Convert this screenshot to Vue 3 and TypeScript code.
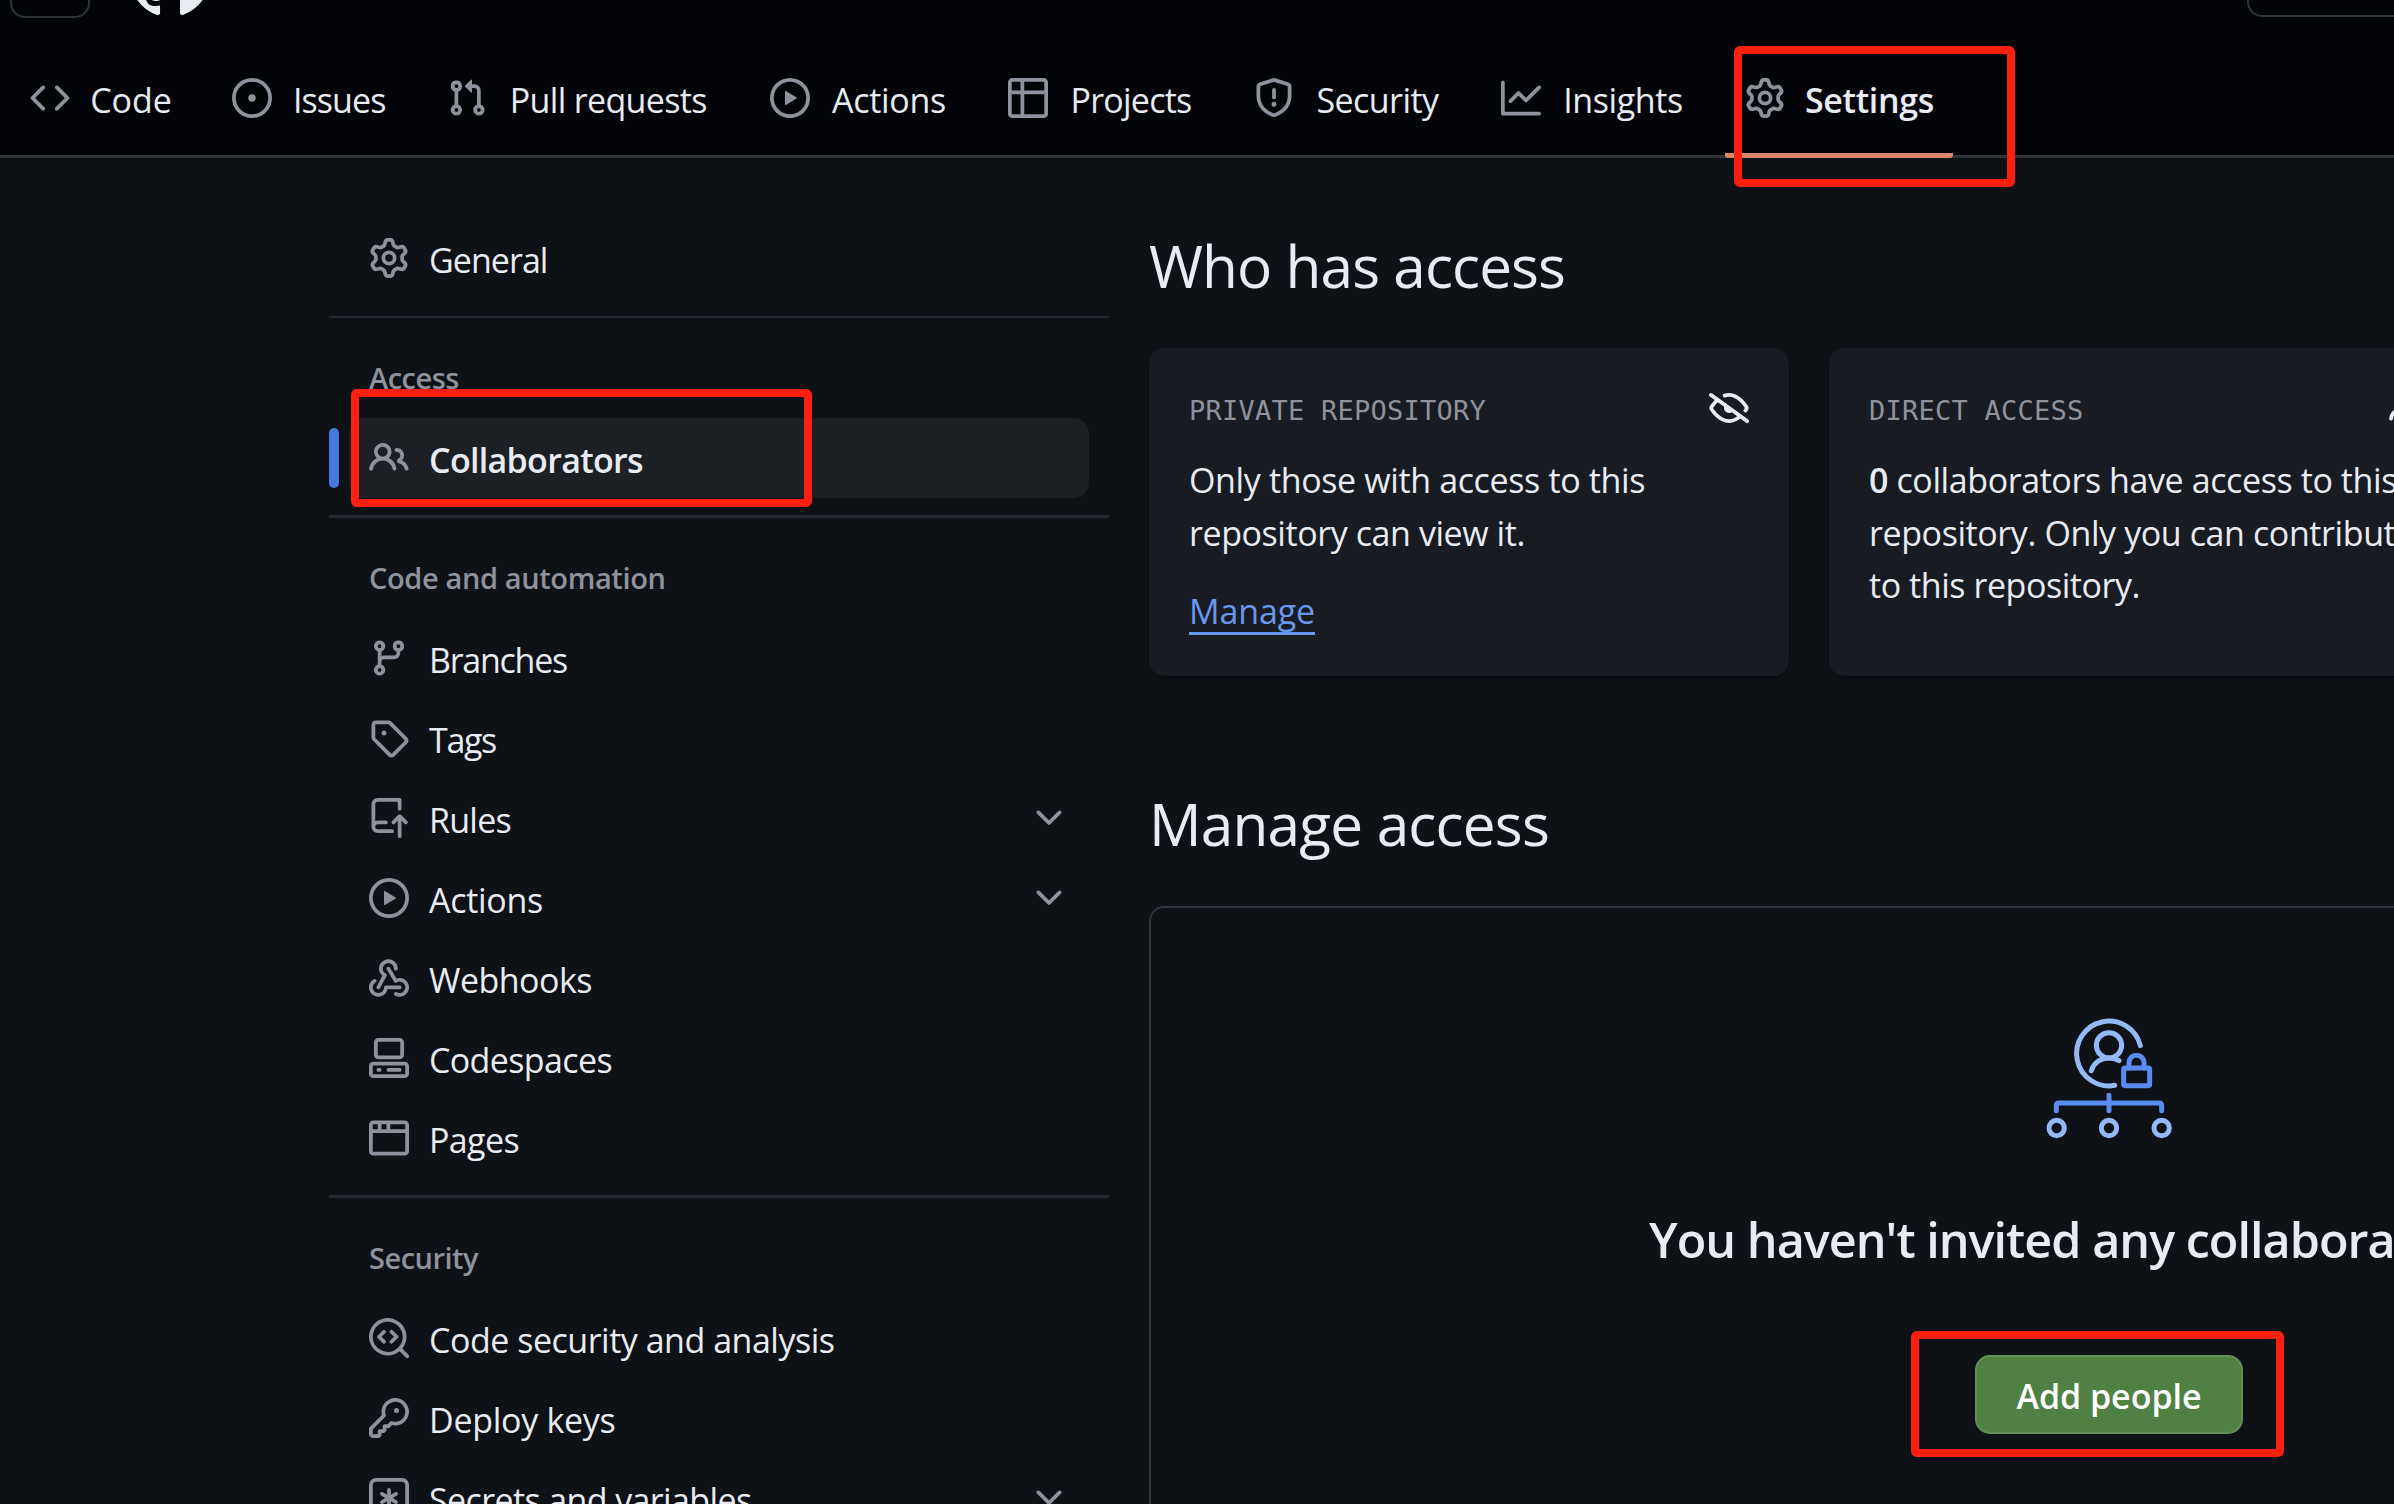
<script setup lang="ts">
import type { Directive } from 'vue'

interface Tab { label: string; icon: string; width: number; text: number; active?: boolean }
interface Item { label: string; icon: string; text: number; active?: boolean; expandable?: boolean }
interface Section { title?: string; titleWidth?: number; items: Item[] }

// Tracks the text out or in so that its advance width equals the given number of pixels.
const vFit: Directive<HTMLElement, number> = {
  mounted(el, binding) {
    const natural = el.getBoundingClientRect().width
    const count = (el.textContent ?? '').length
    el.style.letterSpacing = `${((binding.value - natural) / count).toFixed(4)}px`
  },
}

const icons: Record<string, string> = {
  code: 'm11.28 3.22 4.25 4.25a.75.75 0 0 1 0 1.06l-4.25 4.25a.749.749 0 0 1-1.275-.326.749.749 0 0 1 .215-.734L13.94 8l-3.72-3.72a.749.749 0 0 1 .326-1.275.749.749 0 0 1 .734.215Zm-6.56 0a.751.751 0 0 1 1.042.018.751.751 0 0 1 .018 1.042L2.06 8l3.72 3.72a.749.749 0 0 1-.326 1.275.749.749 0 0 1-.734-.215L.47 8.53a.75.75 0 0 1 0-1.06Z',
  issue: 'M8 9.5a1.5 1.5 0 1 0 0-3 1.5 1.5 0 0 0 0 3ZM8 0a8 8 0 1 1 0 16A8 8 0 0 1 8 0ZM1.5 8a6.5 6.5 0 1 0 13 0 6.5 6.5 0 0 0-13 0Z',
  pull: 'M1.5 3.25a2.25 2.25 0 1 1 3 2.122v5.256a2.251 2.251 0 1 1-1.5 0V5.372A2.25 2.25 0 0 1 1.5 3.25Zm5.677-.177L9.573.677A.25.25 0 0 1 10 .854V2.5h1A2.5 2.5 0 0 1 13.5 5v5.628a2.251 2.251 0 1 1-1.5 0V5a1 1 0 0 0-1-1h-1v1.646a.25.25 0 0 1-.427.177L7.177 3.427a.25.25 0 0 1 0-.354ZM3.75 2.5a.75.75 0 1 0 0 1.5.75.75 0 0 0 0-1.5Zm0 9.5a.75.75 0 1 0 0 1.5.75.75 0 0 0 0-1.5Zm8.25.75a.75.75 0 1 0 1.5 0 .75.75 0 0 0-1.5 0Z',
  play: 'M8 0a8 8 0 1 1 0 16A8 8 0 0 1 8 0ZM1.5 8a6.5 6.5 0 1 0 13 0 6.5 6.5 0 0 0-13 0Zm4.879-2.773 4.264 2.559a.25.25 0 0 1 0 .428l-4.264 2.559A.25.25 0 0 1 6 10.559V5.442a.25.25 0 0 1 .379-.215Z',
  table: 'M0 1.75C0 .784.784 0 1.75 0h12.5C15.216 0 16 .784 16 1.75v12.5A1.75 1.75 0 0 1 14.25 16H1.75A1.75 1.75 0 0 1 0 14.25ZM6.5 6.5v8h7.75a.25.25 0 0 0 .25-.25V6.5Zm8-1.5V1.75a.25.25 0 0 0-.25-.25H6.5V5Zm-13 1.5v7.75c0 .138.112.25.25.25H5v-8ZM5 5V1.5H1.75a.25.25 0 0 0-.25.25V5Z',
  shield: 'M7.467.133a1.748 1.748 0 0 1 1.066 0l5.25 1.68A1.75 1.75 0 0 1 15 3.48V7c0 1.566-.32 3.182-1.303 4.682-.983 1.498-2.585 2.813-5.032 3.855a1.697 1.697 0 0 1-1.33 0c-2.447-1.042-4.049-2.357-5.032-3.855C1.32 10.182 1 8.566 1 7V3.48a1.75 1.75 0 0 1 1.217-1.667Zm.61 1.429a.25.25 0 0 0-.153 0l-5.25 1.68a.25.25 0 0 0-.174.238V7c0 1.358.275 2.666 1.057 3.86.784 1.194 2.121 2.34 4.366 3.297a.196.196 0 0 0 .154 0c2.245-.956 3.582-2.104 4.366-3.298C13.225 9.666 13.5 8.36 13.5 7V3.48a.251.251 0 0 0-.174-.237l-5.25-1.68ZM8.75 4.75v3a.75.75 0 0 1-1.5 0v-3a.75.75 0 0 1 1.5 0ZM9 10.5a1 1 0 1 1-2 0 1 1 0 0 1 2 0Z',
  graph: 'M1.5 1.75V13.5h13.75a.75.75 0 0 1 0 1.5H.75a.75.75 0 0 1-.75-.75V1.75a.75.75 0 0 1 1.5 0Zm14.28 2.53-5.25 5.25a.75.75 0 0 1-1.06 0L7 7.06 4.28 9.78a.751.751 0 0 1-1.042-.018.751.751 0 0 1-.018-1.042l3.25-3.25a.75.75 0 0 1 1.06 0L10 7.94l4.72-4.72a.751.751 0 0 1 1.042.018.751.751 0 0 1 .018 1.042Z',
  gear: 'M8 0a8.2 8.2 0 0 1 .701.031C9.444.095 9.99.645 10.16 1.29l.288 1.107c.018.066.079.158.212.224.231.114.454.243.668.386.123.082.233.09.299.071l1.103-.303c.644-.176 1.392.021 1.82.63.27.385.506.792.704 1.218.315.675.111 1.422-.364 1.891l-.814.806c-.049.048-.098.147-.088.294.016.257.016.515 0 .772-.01.147.038.246.088.294l.814.806c.475.469.679 1.216.364 1.891a7.977 7.977 0 0 1-.704 1.217c-.428.61-1.176.807-1.82.63l-1.102-.302c-.067-.019-.177-.011-.3.071a5.909 5.909 0 0 1-.668.386c-.133.066-.194.158-.211.224l-.29 1.106c-.168.646-.715 1.196-1.458 1.26a8.006 8.006 0 0 1-1.402 0c-.743-.064-1.289-.614-1.458-1.26l-.289-1.106c-.018-.066-.079-.158-.212-.224a5.738 5.738 0 0 1-.668-.386c-.123-.082-.233-.09-.299-.071l-1.103.303c-.644.176-1.392-.021-1.82-.63a8.12 8.12 0 0 1-.704-1.218c-.315-.675-.111-1.422.363-1.891l.815-.806c.05-.048.098-.147.088-.294a6.214 6.214 0 0 1 0-.772c.01-.147-.038-.246-.088-.294l-.815-.806C.635 6.045.431 5.298.746 4.623a7.92 7.92 0 0 1 .704-1.217c.428-.61 1.176-.807 1.82-.63l1.102.302c.067.019.177.011.3-.071.214-.143.437-.272.668-.386.133-.066.194-.158.211-.224l.29-1.106C6.009.645 6.556.095 7.299.03 7.53.01 7.764 0 8 0Zm-.571 1.525c-.036.003-.108.036-.137.146l-.289 1.105c-.147.561-.549.967-.998 1.189-.173.086-.34.183-.5.29-.417.278-.97.423-1.529.27l-1.103-.303c-.109-.03-.175.016-.195.045-.22.312-.412.644-.573.99-.014.031-.021.11.059.19l.815.806c.411.406.562.957.53 1.456a4.709 4.709 0 0 0 0 .582c.032.499-.119 1.05-.53 1.456l-.815.806c-.081.08-.073.159-.059.19.162.346.353.677.573.989.02.03.085.076.195.046l1.102-.303c.56-.153 1.113-.008 1.53.27.161.107.328.204.501.29.447.222.85.629.997 1.189l.289 1.105c.029.109.101.143.137.146a6.6 6.6 0 0 0 1.142 0c.036-.003.108-.036.137-.146l.289-1.105c.147-.561.549-.967.998-1.189.173-.086.34-.183.5-.29.417-.278.97-.423 1.529-.27l1.103.303c.109.029.175-.016.195-.045.22-.313.411-.644.573-.99.014-.031.021-.11-.059-.19l-.815-.806c-.411-.406-.562-.957-.53-1.456a4.709 4.709 0 0 0 0-.582c-.032-.499.119-1.05.53-1.456l.815-.806c.081-.08.073-.159.059-.19a6.464 6.464 0 0 0-.573-.989c-.02-.03-.085-.076-.195-.046l-1.102.303c-.56.153-1.113.008-1.53-.27a4.44 4.44 0 0 0-.501-.29c-.447-.222-.85-.629-.997-1.189l-.289-1.105c-.029-.11-.101-.143-.137-.146a6.6 6.6 0 0 0-1.142 0ZM11 8a3 3 0 1 1-6 0 3 3 0 0 1 6 0ZM9.5 8a1.5 1.5 0 1 0-3.001.001A1.5 1.5 0 0 0 9.5 8Z',
  people: 'M2 5.5a3.5 3.5 0 1 1 5.898 2.549 5.508 5.508 0 0 1 3.034 4.084.75.75 0 1 1-1.482.235 4 4 0 0 0-7.9 0 .75.75 0 0 1-1.482-.236A5.507 5.507 0 0 1 3.102 8.05 3.493 3.493 0 0 1 2 5.5ZM11 4a3.001 3.001 0 0 1 2.22 5.018 5.01 5.01 0 0 1 2.56 3.012.749.749 0 0 1-.885.954.752.752 0 0 1-.549-.514 3.507 3.507 0 0 0-2.522-2.372.75.75 0 0 1-.574-.73v-.352a.75.75 0 0 1 .416-.672A1.5 1.5 0 0 0 11 5.5.75.75 0 0 1 11 4Zm-5.5-.5a2 2 0 1 0-.001 3.999A2 2 0 0 0 5.5 3.5Z',
  branch: 'M9.5 3.25a2.25 2.25 0 1 1 3 2.122V6A2.5 2.5 0 0 1 10 8.5H6a1 1 0 0 0-1 1v1.128a2.251 2.251 0 1 1-1.5 0V5.372a2.25 2.25 0 1 1 1.5 0v1.836A2.493 2.493 0 0 1 6 7h4a1 1 0 0 0 1-1v-.628A2.25 2.25 0 0 1 9.5 3.25Zm-6 0a.75.75 0 1 0 1.5 0 .75.75 0 0 0-1.5 0Zm8.25-.75a.75.75 0 1 0 0 1.5.75.75 0 0 0 0-1.5ZM4.25 12a.75.75 0 1 0 0 1.5.75.75 0 0 0 0-1.5Z',
  tag: 'M1 7.775V2.75C1 1.784 1.784 1 2.75 1h5.025c.464 0 .91.184 1.238.513l6.25 6.25a1.75 1.75 0 0 1 0 2.474l-5.026 5.026a1.75 1.75 0 0 1-2.474 0l-6.25-6.25A1.752 1.752 0 0 1 1 7.775Zm1.5 0c0 .066.026.13.073.177l6.25 6.25a.25.25 0 0 0 .354 0l5.025-5.025a.25.25 0 0 0 0-.354l-6.25-6.25a.25.25 0 0 0-.177-.073H2.75a.25.25 0 0 0-.25.25ZM6 5a1 1 0 1 1 0 2 1 1 0 0 1 0-2Z',
  rules: 'M1 2.5A2.5 2.5 0 0 1 3.5 0h8.75a.75.75 0 0 1 .75.75v3.5a.75.75 0 0 1-1.5 0V1.5h-8a1 1 0 0 0-1 1v6.708A2.493 2.493 0 0 1 3.5 9h3.25a.75.75 0 0 1 0 1.5H3.5a1 1 0 0 0 0 2h5.75a.75.75 0 0 1 0 1.5H3.5A2.5 2.5 0 0 1 1 11.5Zm13.23 7.79h-.001l-1.224-1.224v6.184a.75.75 0 0 1-1.5 0V9.066L10.28 10.29a.75.75 0 0 1-1.06-1.061l2.505-2.504a.75.75 0 0 1 1.06 0L15.29 9.23a.751.751 0 0 1-.018 1.042.751.751 0 0 1-1.042.018Z',
  webhook: 'M5.5 4.25a2.25 2.25 0 0 1 4.5 0 .75.75 0 0 0 1.5 0 3.75 3.75 0 1 0-6.14 2.889l-2.272 4.258a.75.75 0 0 0 1.324.706L7 7.25a.75.75 0 0 0-.309-1.015A2.25 2.25 0 0 1 5.5 4.25ZM7.364 3.607a.75.75 0 0 1 1.03.257l2.608 4.349a3.75 3.75 0 1 1-.628 6.785.75.75 0 0 1 .752-1.299 2.25 2.25 0 1 0-.033-3.88.75.75 0 0 1-1.03-.256L7.107 4.636a.75.75 0 0 1 .257-1.03ZM2.9 8.776A.75.75 0 0 1 2.625 9.8 2.25 2.25 0 1 0 6 11.75a.75.75 0 0 1 .75-.751h5.5a.75.75 0 0 1 0 1.5H7.425a3.751 3.751 0 1 1-5.55-3.998.75.75 0 0 1 1.024.274Z',
  codespaces: 'M0 11.25c0-.966.784-1.75 1.75-1.75h12.5c.966 0 1.75.784 1.75 1.75v3A1.75 1.75 0 0 1 14.25 16H1.75A1.75 1.75 0 0 1 0 14.25Zm2-9.5C2 .784 2.784 0 3.75 0h8.5C13.216 0 14 .784 14 1.75v5a1.75 1.75 0 0 1-1.75 1.75h-8.5A1.75 1.75 0 0 1 2 6.75Zm1.75-.25a.25.25 0 0 0-.25.25v5c0 .138.112.25.25.25h8.5a.25.25 0 0 0 .25-.25v-5a.25.25 0 0 0-.25-.25Zm-2 9.5a.25.25 0 0 0-.25.25v3c0 .138.112.25.25.25h12.5a.25.25 0 0 0 .25-.25v-3a.25.25 0 0 0-.25-.25ZM7 12.75a.75.75 0 0 1 .75-.75h4.5a.75.75 0 0 1 0 1.5h-4.5a.75.75 0 0 1-.75-.75Zm-4 0a.75.75 0 0 1 .75-.75h.5a.75.75 0 0 1 0 1.5h-.5a.75.75 0 0 1-.75-.75Z',
  browser: 'M0 2.75C0 1.784.784 1 1.75 1h12.5c.966 0 1.75.784 1.75 1.75v10.5A1.75 1.75 0 0 1 14.25 15H1.75A1.75 1.75 0 0 1 0 13.25ZM14.5 6h-13v7.25c0 .138.112.25.25.25h12.5a.25.25 0 0 0 .25-.25Zm-6-3.5v2h6V2.75a.25.25 0 0 0-.25-.25ZM5 2.5v2h2v-2Zm-3.25 0a.25.25 0 0 0-.25.25V4.5h2v-2Z',
  codescan: 'M8.47 4.97a.75.75 0 0 0 0 1.06L9.94 7.5 8.47 8.97a.75.75 0 1 0 1.06 1.06l2-2a.75.75 0 0 0 0-1.06l-2-2a.75.75 0 0 0-1.06 0ZM6.53 6.03a.75.75 0 0 0-1.06-1.06l-2 2a.75.75 0 0 0 0 1.06l2 2a.75.75 0 1 0 1.06-1.06L5.06 7.5l1.47-1.47ZM12.246 13.307a7.5 7.5 0 1 1 1.06-1.06l2.474 2.473a.749.749 0 0 1-.326 1.275.749.749 0 0 1-.734-.215ZM1.5 7.5a6.002 6.002 0 0 0 3.608 5.504 6.002 6.002 0 0 0 6.486-1.117.748.748 0 0 1 .292-.293A6 6 0 1 0 1.5 7.5Z',
  key: 'M10.5 0a5.499 5.499 0 1 1-1.288 10.848l-.932.932a.749.749 0 0 1-.53.22H7v.75a.749.749 0 0 1-.22.53l-.5.5a.749.749 0 0 1-.53.22H5v.75a.749.749 0 0 1-.22.53l-.5.5a.749.749 0 0 1-.53.22h-2A1.75 1.75 0 0 1 0 14.25v-2c0-.199.079-.389.22-.53l4.932-4.932A5.5 5.5 0 0 1 10.5 0Zm-4 5.5c-.001.431.069.86.205 1.269a.75.75 0 0 1-.181.768L1.5 12.56v1.69c0 .138.112.25.25.25h1.69l.06-.06v-1.19a.75.75 0 0 1 .75-.75h1.19l.06-.06v-1.19a.75.75 0 0 1 .75-.75h1.19l1.023-1.025a.75.75 0 0 1 .768-.18A4 4 0 1 0 6.5 5.5ZM11 6a1 1 0 1 1 0-2 1 1 0 0 1 0 2Z',
  secret: 'M0 2.75A2.75 2.75 0 0 1 2.75 0h10.5A2.75 2.75 0 0 1 16 2.75v10.5A2.75 2.75 0 0 1 13.25 16H2.75A2.75 2.75 0 0 1 0 13.25ZM2.75 1.5c-.69 0-1.25.56-1.25 1.25v10.5c0 .69.56 1.25 1.25 1.25h10.5c.69 0 1.25-.56 1.25-1.25V2.75c0-.69-.56-1.25-1.25-1.25ZM8 4a.75.75 0 0 1 .75.75V6.7l1.69-.975a.75.75 0 0 1 .75 1.3L9.5 8l1.69.976a.75.75 0 0 1-.75 1.298L8.75 9.3v1.951a.75.75 0 0 1-1.5 0V9.299l-1.69.976a.75.75 0 0 1-.75-1.3L6.5 8l-1.69-.975a.75.75 0 0 1 .75-1.3l1.69.976V4.75A.75.75 0 0 1 8 4Z',
  chevron: 'M12.78 5.22a.749.749 0 0 1 0 1.06l-4.25 4.25a.749.749 0 0 1-1.06 0L3.22 6.28a.749.749 0 1 1 1.06-1.06L8 8.939l3.72-3.719a.749.749 0 0 1 1.06 0Z',
  eyeClosed: 'M.143 2.31a.75.75 0 0 1 1.047-.167l14.5 10.5a.75.75 0 1 1-.88 1.214l-2.248-1.628C11.346 13.19 9.792 14 8 14c-1.981 0-3.67-.992-4.933-2.078C1.797 10.832.88 9.577.43 8.9a1.619 1.619 0 0 1 0-1.797c.353-.533.995-1.42 1.868-2.305L.31 3.357A.75.75 0 0 1 .143 2.31Zm1.536 5.622A.12.12 0 0 0 1.657 8c0 .021.006.045.022.068.412.621 1.242 1.75 2.366 2.717C5.175 11.758 6.527 12.5 8 12.5c1.195 0 2.31-.488 3.29-1.191L9.063 9.695A2 2 0 0 1 6.058 7.52L3.529 5.688a14.207 14.207 0 0 0-1.85 2.244ZM8 3.5c-.516 0-1.017.09-1.499.251a.75.75 0 1 1-.473-1.423A6.207 6.207 0 0 1 8 2c1.981 0 3.67.992 4.933 2.078 1.27 1.091 2.187 2.345 2.637 3.023a1.62 1.62 0 0 1 0 1.798c-.11.166-.248.365-.41.587a.75.75 0 1 1-1.21-.887c.148-.201.272-.382.371-.53a.119.119 0 0 0 0-.137c-.412-.621-1.242-1.75-2.366-2.717C10.825 4.242 9.473 3.5 8 3.5Z',
  mark: 'M8 0c4.42 0 8 3.58 8 8a8.013 8.013 0 0 1-5.45 7.59c-.4.08-.55-.17-.55-.38 0-.27.01-1.13.01-2.2 0-.75-.25-1.23-.54-1.48 1.78-.2 3.65-.88 3.65-3.95 0-.88-.31-1.59-.82-2.15.08-.2.36-1.02-.08-2.12 0 0-.67-.22-2.2.82-.64-.18-1.32-.27-2-.27-.68 0-1.36.09-2 .27-1.53-1.03-2.2-.82-2.2-.82-.44 1.1-.16 1.92-.08 2.12-.51.56-.82 1.28-.82 2.15 0 3.06 1.86 3.75 3.64 3.95-.23.2-.44.55-.51 1.07-.46.21-1.61.55-2.33-.66-.15-.24-.6-.83-1.23-.82-.67.01-.27.38.01.53.34.19.73.9.82 1.13.16.45.68 1.31 2.69.94 0 .67.01 1.3.01 1.49 0 .21-.15.45-.55.38A7.995 7.995 0 0 1 0 8c0-4.42 3.58-8 8-8Z',
}

const tabs: Tab[] = [
  { label: 'Code', icon: 'code', width: 182, text: 81.5 },
  { label: 'Issues', icon: 'issue', width: 194.5, text: 92.5 },
  { label: 'Pull requests', icon: 'pull', width: 303.5, text: 197 },
  { label: 'Actions', icon: 'play', width: 218, text: 114 },
  { label: 'Projects', icon: 'table', width: 226, text: 121 },
  { label: 'Security', icon: 'shield', width: 227, text: 122 },
  { label: 'Insights', icon: 'graph', width: 224, text: 119.5 },
  { label: 'Settings', icon: 'gear', width: 228, text: 129, active: true },
]

const sections: Section[] = [
  { items: [{ label: 'General', icon: 'gear', text: 118.5 }] },
  {
    title: 'Access',
    titleWidth: 90,
    items: [{ label: 'Collaborators', icon: 'people', text: 214, active: true }],
  },
  {
    title: 'Code and automation',
    titleWidth: 296.5,
    items: [
      { label: 'Branches', icon: 'branch', text: 138 },
      { label: 'Tags', icon: 'tag', text: 67 },
      { label: 'Rules', icon: 'rules', text: 82, expandable: true },
      { label: 'Actions', icon: 'play', text: 114, expandable: true },
      { label: 'Webhooks', icon: 'webhook', text: 163 },
      { label: 'Codespaces', icon: 'codespaces', text: 183 },
      { label: 'Pages', icon: 'browser', text: 90 },
    ],
  },
  {
    title: 'Security',
    titleWidth: 109,
    items: [
      { label: 'Code security and analysis', icon: 'codescan', text: 405.5 },
      { label: 'Deploy keys', icon: 'key', text: 186.5 },
      { label: 'Secrets and variables', icon: 'secret', text: 322.5, expandable: true },
    ],
  },
]
</script>

<template>
  <div class="page">
    <header class="header">
      <div class="topbar">
        <span class="menu-button"></span>
        <svg class="mark" viewBox="0 0 16 16"><path :d="icons.mark" /></svg>
        <span class="search"></span>
      </div>
      <nav class="tabs">
        <a
          v-for="tab in tabs"
          :key="tab.label"
          class="tab"
          :class="{ active: tab.active }"
          :style="{ width: tab.width + 'px' }"
        >
          <svg class="icon" viewBox="0 0 16 16"><path :d="icons[tab.icon]" /></svg>
          <span class="tab-label"><span v-fit="tab.text">{{ tab.label }}</span></span>
        </a>
      </nav>
    </header>

    <div class="body">
      <aside class="sidebar">
        <section v-for="(section, i) in sections" :key="i" class="section">
          <h3 v-if="section.title" class="section-title">
            <span v-fit="section.titleWidth ?? 0">{{ section.title }}</span>
          </h3>
          <a v-for="item in section.items" :key="item.label" class="item" :class="{ active: item.active }">
            <svg class="icon" viewBox="0 0 16 16"><path :d="icons[item.icon]" /></svg>
            <span v-fit="item.text" class="item-label">{{ item.label }}</span>
            <svg v-if="item.expandable" class="icon chevron" viewBox="0 0 16 16"><path :d="icons.chevron" /></svg>
          </a>
        </section>
      </aside>

      <main class="main">
        <h2 class="heading"><span v-fit="416">Who has access</span></h2>
        <div class="cards">
          <article class="card">
            <div class="card-head">
              <span v-fit="297" class="card-label">PRIVATE REPOSITORY</span>
              <svg class="icon light" viewBox="0 0 16 16"><path :d="icons.eyeClosed" /></svg>
            </div>
            <p class="card-text">
              <span v-fit="456">Only those with access to this</span><br />
              <span v-fit="336">repository can view it.</span>
            </p>
            <a class="manage"><span v-fit="126">Manage</span></a>
          </article>
          <article class="card">
            <div class="card-head">
              <span v-fit="214.5" class="card-label">DIRECT ACCESS</span>
              <svg class="icon light" viewBox="0 0 16 16"><path :d="icons.people" /></svg>
            </div>
            <p class="card-text">
              <span v-fit="528"><b>0</b> collaborators have access to this</span><br />
              <span v-fit="545">repository. Only you can contribute</span><br />
              <span v-fit="271">to this repository.</span>
            </p>
          </article>
        </div>

        <h2 class="heading second"><span v-fit="400">Manage access</span></h2>
        <div class="panel">
          <svg class="illustration" viewBox="0 0 540 450">
            <g class="stroke-light">
              <path d="M361 137A97 97 0 1 0 284 256" />
              <circle cx="267" cy="136" r="38" />
              <path d="M214 212C222 188 242 174 267 174C278 174 288 177 297 182" />
              <circle cx="110" cy="384" r="23" />
              <circle cx="267" cy="384" r="23" />
              <circle cx="425" cy="384" r="23" />
            </g>
            <g class="stroke-blue">
              <rect x="311" y="204" width="78" height="53" rx="4" />
              <path d="M327 204V188a22.500 22.500 0 0 1 45 0V204" />
              <path d="M109 332V317q0-8 8-8H417q8 0 8 8V332M267 286V332" />
            </g>
          </svg>
          <h3 class="blank-title"><span v-fit="917">You haven't invited any collaborators yet</span></h3>
          <button class="add"><span v-fit="185">Add people</span></button>
        </div>
      </main>
    </div>

    <div class="callout callout-settings"></div>
    <div class="callout callout-collaborators"></div>
    <div class="callout callout-add"></div>
  </div>
</template>

<style>
body {
  margin: 0;
  background: #0e1116;
}
</style>

<style scoped>
.page {
  position: relative;
  width: 2394px;
  height: 1504px;
  overflow: hidden;
  background: #0e1116;
  color: #e8ecf2;
  font-family: 'Open Sans', 'Noto Sans', sans-serif;
  font-size: 34px;
  white-space: nowrap;
}
.header {
  box-sizing: border-box;
  height: 158px;
  background: #020307;
  border-bottom: 3px solid #2f3338;
}
.topbar {
  display: flex;
  align-items: flex-end;
  height: 18px;
  overflow: hidden;
}
.menu-button {
  box-sizing: border-box;
  flex: none;
  width: 80px;
  height: 80px;
  margin-left: 10px;
  border: 2px solid #30343a;
  border-radius: 15px;
}
.mark {
  flex: none;
  width: 80px;
  height: 80px;
  margin: 0 0 1px 40px;
  fill: #e8ecf2;
}
.search {
  box-sizing: border-box;
  flex: none;
  width: 800px;
  height: 80px;
  margin: 0 0 1px 2037px;
  border: 2px solid #30343a;
  border-radius: 15px;
}
.tabs {
  display: flex;
  gap: 20px;
  height: 140px;
  padding-left: 10px;
}
.tab {
  box-sizing: border-box;
  display: flex;
  align-items: flex-start;
  flex: none;
  height: 140px;
  padding: 60px 20px 0;
  line-height: 45px;
}
.tab.active {
  border-bottom: 5px solid #dd8568;
  border-radius: 3px;
  font-weight: 600;
}
.tab-label {
  flex: 1;
  margin-left: 20px;
  text-align: center;
}
.icon {
  flex: none;
  width: 40px;
  height: 40px;
  fill: #8d929c;
}
.icon.light {
  fill: #e8ecf2;
}
.body {
  display: flex;
  padding-left: 329px;
}
.sidebar {
  flex: none;
  width: 780px;
  padding-top: 60px;
}
.section {
  padding: 0 20px 17px;
  border-bottom: 3px solid #262a30;
}
.section:first-child {
  padding-bottom: 18px;
  border-bottom-width: 2px;
}
.section-title {
  margin: 0;
  padding: 40px 20px 20px;
  line-height: 40px;
  font-size: 29px;
  font-weight: 600;
  color: #8d929c;
}
.item {
  position: relative;
  display: flex;
  align-items: center;
  gap: 20px;
  height: 80px;
  padding: 0 20px;
  border-radius: 15px;
}
.item-label {
  padding-top: 3px;
}
.item.active {
  background: #1c2024;
  font-weight: 600;
}
.item.active::before {
  content: '';
  position: absolute;
  left: -20px;
  top: 10px;
  width: 10px;
  height: 60px;
  border-radius: 5px;
  background: #4778e0;
}
.chevron {
  margin-left: auto;
}
.main {
  flex: none;
  width: 1920px;
  margin-left: 40px;
  padding-top: 62px;
}
.heading {
  margin: 0 0 38px;
  font-size: 58.5px;
  line-height: 90px;
  font-weight: 400;
}
.heading.second {
  margin-top: 102px;
}
.cards {
  display: flex;
  gap: 40px;
}
.card {
  box-sizing: border-box;
  flex: none;
  width: 640px;
  height: 328px;
  padding: 40px;
  border-radius: 15px;
  background: #181b22;
  box-shadow: 0 2px 2px rgba(0, 0, 0, 0.35);
}
.card-head {
  display: flex;
  justify-content: space-between;
  height: 40px;
  line-height: 46px;
}
.card-label {
  font-family: 'DejaVu Sans Mono', monospace;
  font-size: 27px;
  color: #8d929c;
}
.card-text {
  margin: 26px 0 0;
  line-height: 52.5px;
}
.card-text b {
  font-weight: 600;
}
.manage {
  display: block;
  width: fit-content;
  margin-top: 31px;
  line-height: 42px;
  color: #6897ee;
  border-bottom: 3px solid #6897ee;
}
.panel {
  box-sizing: border-box;
  display: flex;
  flex-direction: column;
  align-items: center;
  height: 700px;
  padding-top: 92px;
  border: 2px solid #30343a;
  border-radius: 15px;
}
.illustration {
  width: 180px;
  height: 150px;
  margin-left: 2px;
  fill: none;
  stroke-width: 15px;
  stroke-linecap: round;
  stroke-linejoin: round;
}
.stroke-light {
  stroke: #93b9f7;
}
.stroke-blue {
  stroke: #588cf0;
}
.blank-title {
  margin: 59px 3px 86px 0;
  font-size: 48.5px;
  line-height: 60px;
  font-weight: 600;
}
.add {
  box-sizing: border-box;
  width: 268px;
  height: 79px;
  padding: 2px 0 0;
  border: 2px solid #648f59;
  border-radius: 15px;
  background: #4f8142;
  color: #fff;
  font: 600 34px 'Open Sans', 'Noto Sans', sans-serif;
}
.callout {
  position: absolute;
  box-sizing: border-box;
  border: 8px solid #ff1f11;
  border-radius: 6px;
}
.callout-settings {
  left: 1734px;
  top: 46px;
  width: 281px;
  height: 141px;
}
.callout-collaborators {
  left: 351px;
  top: 389px;
  width: 461px;
  height: 118px;
}
.callout-add {
  left: 1911px;
  top: 1331px;
  width: 373px;
  height: 126px;
}
</style>
